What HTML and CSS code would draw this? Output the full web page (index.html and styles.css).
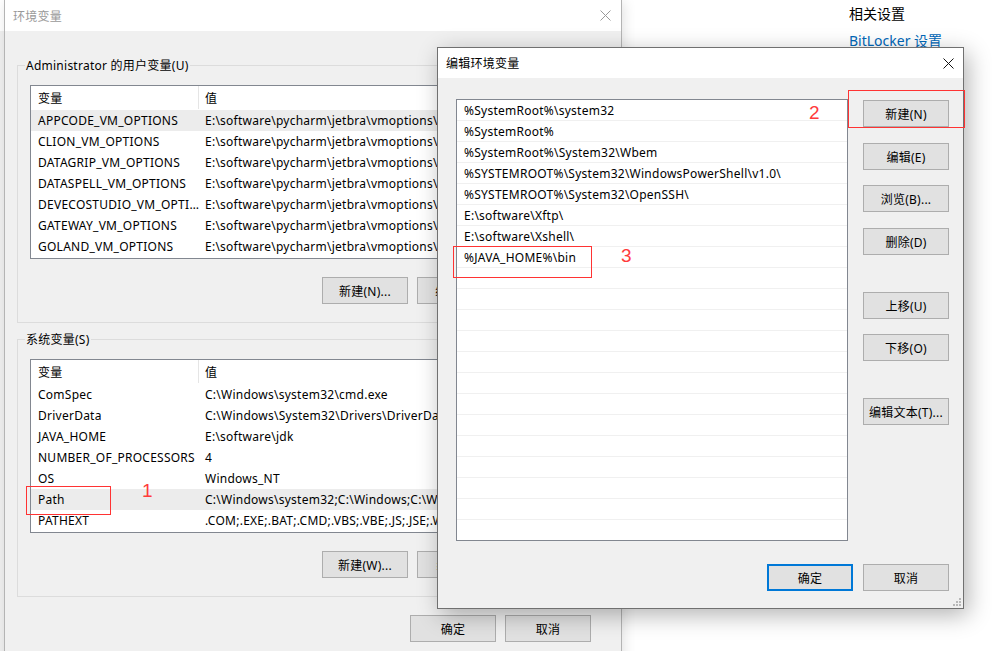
FILE: index.html
```html
<!DOCTYPE html>
<html lang="zh-CN">
<head>
<meta charset="utf-8">
<title>环境变量</title>
<link rel="stylesheet" href="styles.css">
</head>
<body>
<div class="desktop">
  <div class="bgwin"></div>

  <aside class="settings">
    <div class="settings-title">相关设置</div>
    <a class="settings-link">BitLocker 设置</a>
  </aside>

  <section class="win win-env">
    <header class="titlebar inactive">
      <span class="title">环境变量</span>
      <svg class="close" width="11" height="11" viewBox="0 0 11 11"><path d="M0.5 0.5L10.5 10.5M10.5 0.5L0.5 10.5" stroke="#9a9a9a" stroke-width="1"/></svg>
    </header>
    <div class="env-body">
      <fieldset class="group">
        <legend>Administrator 的用户变量(U)</legend>
        <div class="group-inner">
          <div class="vtable">
            <div class="vrow vhead"><span class="c1">变量</span><span class="c2">值</span></div>
            <div class="vrow sel"><span class="c1">APPCODE_VM_OPTIONS</span><span class="c2">E:\software\pycharm\jetbra\vmoptions\appcode.vmoptions</span></div>
            <div class="vrow"><span class="c1">CLION_VM_OPTIONS</span><span class="c2">E:\software\pycharm\jetbra\vmoptions\clion.vmoptions</span></div>
            <div class="vrow"><span class="c1">DATAGRIP_VM_OPTIONS</span><span class="c2">E:\software\pycharm\jetbra\vmoptions\datagrip.vmoptions</span></div>
            <div class="vrow"><span class="c1">DATASPELL_VM_OPTIONS</span><span class="c2">E:\software\pycharm\jetbra\vmoptions\dataspell.vmoptions</span></div>
            <div class="vrow"><span class="c1">DEVECOSTUDIO_VM_OPTIONS</span><span class="c2">E:\software\pycharm\jetbra\vmoptions\devecostudio.vmoptions</span></div>
            <div class="vrow"><span class="c1">GATEWAY_VM_OPTIONS</span><span class="c2">E:\software\pycharm\jetbra\vmoptions\gateway.vmoptions</span></div>
            <div class="vrow"><span class="c1">GOLAND_VM_OPTIONS</span><span class="c2">E:\software\pycharm\jetbra\vmoptions\goland.vmoptions</span></div>
          </div>
          <div class="btnrow">
            <button class="btn">新建(N)...</button>
            <button class="btn">编辑(E)...</button>
            <button class="btn">删除(D)</button>
          </div>
        </div>
      </fieldset>

      <fieldset class="group group2">
        <legend>系统变量(S)</legend>
        <div class="group-inner">
          <div class="vtable">
            <div class="vrow vhead"><span class="c1">变量</span><span class="c2">值</span></div>
            <div class="vrow"><span class="c1">ComSpec</span><span class="c2">C:\Windows\system32\cmd.exe</span></div>
            <div class="vrow"><span class="c1">DriverData</span><span class="c2">C:\Windows\System32\Drivers\DriverData</span></div>
            <div class="vrow"><span class="c1">JAVA_HOME</span><span class="c2">E:\software\jdk</span></div>
            <div class="vrow"><span class="c1">NUMBER_OF_PROCESSORS</span><span class="c2">4</span></div>
            <div class="vrow"><span class="c1">OS</span><span class="c2">Windows_NT</span></div>
            <div class="vrow sel"><span class="c1">Path</span><span class="c2">C:\Windows\system32;C:\Windows;C:\Windows\System32\Wbem;C:\Windows\System32\WindowsPowerShell\v1.0\</span></div>
            <div class="vrow"><span class="c1">PATHEXT</span><span class="c2">.COM;.EXE;.BAT;.CMD;.VBS;.VBE;.JS;.JSE;.WSF;.WSH;.MSC</span></div>
          </div>
          <div class="btnrow">
            <button class="btn">新建(W)...</button>
            <button class="btn">编辑(I)...</button>
            <button class="btn">删除(L)</button>
          </div>
        </div>
      </fieldset>

      <div class="footer env-footer">
        <button class="btn">确定</button>
        <button class="btn">取消</button>
      </div>
    </div>
  </section>

  <section class="win win-edit">
    <header class="titlebar">
      <span class="title">编辑环境变量</span>
      <svg class="close" width="11" height="11" viewBox="0 0 11 11"><path d="M0.5 0.5L10.5 10.5M10.5 0.5L0.5 10.5" stroke="#111" stroke-width="1"/></svg>
    </header>
    <div class="edit-body">
      <div class="plist">
        <div class="prow">%SystemRoot%\system32</div>
        <div class="prow">%SystemRoot%</div>
        <div class="prow">%SystemRoot%\System32\Wbem</div>
        <div class="prow">%SYSTEMROOT%\System32\WindowsPowerShell\v1.0\</div>
        <div class="prow">%SYSTEMROOT%\System32\OpenSSH\</div>
        <div class="prow">E:\software\Xftp\</div>
        <div class="prow">E:\software\Xshell\</div>
        <div class="prow">%JAVA_HOME%\bin</div>
        <div class="prow"></div>
        <div class="prow"></div>
        <div class="prow"></div>
        <div class="prow"></div>
        <div class="prow"></div>
        <div class="prow"></div>
        <div class="prow"></div>
        <div class="prow"></div>
        <div class="prow"></div>
        <div class="prow"></div>
        <div class="prow"></div>
        <div class="prow"></div>
        <div class="prow"></div>
      </div>
      <div class="side">
        <button class="btn">新建(N)</button>
        <button class="btn g16">编辑(E)</button>
        <button class="btn g15">浏览(B)...</button>
        <button class="btn g16">删除(D)</button>
        <button class="btn g37">上移(U)</button>
        <button class="btn g15">下移(O)</button>
        <button class="btn g37">编辑文本(T)...</button>
      </div>
      <div class="footer edit-footer">
        <button class="btn btn-default">确定</button>
        <button class="btn">取消</button>
      </div>
    </div>
    <svg class="grip" width="9" height="9" viewBox="0 0 9 9">
      <rect x="7" y="1" width="2" height="2" fill="#b8b8b8"/>
      <rect x="4" y="4" width="2" height="2" fill="#b8b8b8"/>
      <rect x="7" y="4" width="2" height="2" fill="#b8b8b8"/>
      <rect x="1" y="7" width="2" height="2" fill="#b8b8b8"/>
      <rect x="4" y="7" width="2" height="2" fill="#b8b8b8"/>
      <rect x="7" y="7" width="2" height="2" fill="#b8b8b8"/>
    </svg>
  </section>

  <div class="mark mark-box box1"></div>
  <div class="mark mark-num num1">1</div>
  <div class="mark mark-box box2"></div>
  <div class="mark mark-num num2">2</div>
  <div class="mark mark-box box3"></div>
  <div class="mark mark-num num3">3</div>
</div>
</body>
</html>
```

FILE: styles.css
```css
* { box-sizing: border-box; }
html, body { margin: 0; padding: 0; }
body {
  background: #fff;
  font-family: "Noto Sans", "Noto Sans CJK SC", sans-serif;
  font-size: 12px;
  letter-spacing: 0.25px;
  color: #000;
}
.desktop {
  position: relative;
  width: 992px;
  height: 651px;
  overflow: hidden;
}
.bgwin {
  position: absolute;
  left: 0;
  top: 0;
  width: 5px;
  height: 651px;
  background: linear-gradient(#fff 0 31px, #f0f0f0 31px);
}

/* right-hand settings page */
.settings {
  position: absolute;
  left: 849px;
  top: 5px;
  font-size: 14px;
  line-height: 18px;
  letter-spacing: 0;
}
.settings-link {
  display: block;
  margin-top: 9px;
  color: #0067b8;
}

/* windows */
.win {
  position: absolute;
  background: #f0f0f0;
  display: flex;
  flex-direction: column;
}
.titlebar {
  flex: none;
  background: #fff;
  display: flex;
  align-items: center;
  justify-content: space-between;
}
.close { display: block; }

.win-env {
  left: 4px;
  top: -1px;
  width: 618px;
  height: 670px;
  border: 1px solid #b4b4b4;
  box-shadow: 2px 3px 12px rgba(0, 0, 0, 0.12);
}
.win-env .titlebar {
  height: 31px;
  padding: 0 10px 0 8px;
}
.win-env .title { color: #999; }

.env-body {
  padding: 26px 10px 0 12px;
}

.group {
  margin: 0;
  padding: 0;
  border: 1px solid #dcdcdc;
  min-width: 0;
}
.group legend {
  margin-left: 7px;
  padding: 0 1px;
  line-height: 17px;
  height: 17px;
}
.group2 { margin-top: 8px; }
.group-inner {
  padding: 11px 12px 18px 12px;
}

.vtable {
  background: #fff;
  border: 1px solid #828790;
  padding-bottom: 1px;
  overflow: hidden;
}
.vrow {
  display: flex;
  align-items: center;
  height: 21px;
  white-space: nowrap;
}
.vrow.vhead { height: 24px; }
.vrow.sel { background: #ececec; }
.c1 {
  flex: none;
  width: 168px;
  padding-left: 7px;
  padding-right: 0;
  overflow: hidden;
  text-overflow: ellipsis;
}
.vhead .c1 {
  align-self: stretch;
  display: flex;
  align-items: center;
  border-right: 1px solid #e5e5e5;
  margin-bottom: 1px;
}
.c2 {
  padding-left: 6px;
  overflow: hidden;
}

.btn {
  width: 86px;
  height: 27px;
  padding: 0;
  margin: 0;
  background: #e1e1e1;
  border: 1px solid #adadad;
  font-family: inherit;
  font-size: 12px;
  letter-spacing: inherit;
  color: #000;
  white-space: nowrap;
}
.btnrow {
  display: flex;
  justify-content: flex-end;
  gap: 9px;
  margin-top: 18px;
}
.footer {
  display: flex;
  justify-content: flex-end;
}
.env-footer {
  margin-top: 18px;
  gap: 9px;
  padding-right: 20px;
}

/* edit dialog */
.win-edit {
  left: 437px;
  top: 47px;
  width: 527px;
  height: 562px;
  border: 1px solid #707070;
  box-shadow: 4px 6px 22px rgba(0, 0, 0, 0.3);
}
.win-edit .titlebar {
  height: 30px;
  padding: 0 9px 0 8px;
}
.edit-body {
  flex: 1;
  padding: 21px 13px 17px 18px;
  display: grid;
  grid-template-columns: 392px 86px;
  grid-template-rows: 442px auto;
  column-gap: 15px;
  row-gap: 23px;
}
.plist {
  background: #fff;
  border: 1px solid #828790;
  overflow: hidden;
}
.prow {
  height: 21px;
  padding-top: 2px;
  line-height: 18px;
  padding-left: 7px;
  border-bottom: 1px solid #f0f0f0;
  white-space: nowrap;
}
.side {
  display: flex;
  flex-direction: column;
  padding-top: 1px;
}
.side .g15 { margin-top: 15px; }
.side .g16 { margin-top: 16px; }
.side .g37 { margin-top: 37px; }
.edit-footer {
  grid-column: 1 / -1;
  gap: 10px;
}
.btn-default {
  border: 2px solid #0078d7;
}
.grip {
  position: absolute;
  right: 2px;
  bottom: 2px;
}

/* red annotations */
.mark { position: absolute; }
.mark-box { border: 1px solid #ff3333; }
.mark-num {
  font-family: "Liberation Sans", sans-serif;
  font-size: 19px;
  line-height: 20px;
  letter-spacing: 0;
  color: #ff3b3b;
}
.box1 { left: 26px; top: 486px; width: 85px; height: 29px; }
.num1 { left: 142px; top: 481px; }
.box2 { left: 848px; top: 90px; width: 117px; height: 38px; }
.num2 { left: 809px; top: 103px; }
.box3 { left: 453px; top: 246px; width: 139px; height: 32px; }
.num3 { left: 621px; top: 246px; }
```
